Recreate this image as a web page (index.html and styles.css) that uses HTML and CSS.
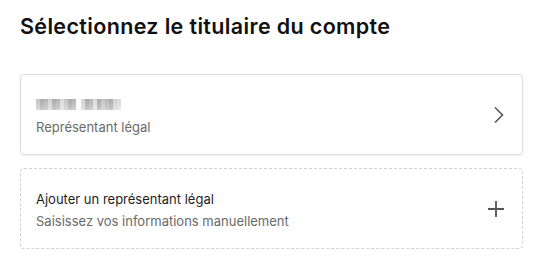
FILE: index.html
```html
<!DOCTYPE html>
<html lang="fr">
<head>
<meta charset="utf-8">
<link rel="stylesheet" href="styles.css">
</head>
<body>
<main class="page">
  <h1 class="title">Sélectionnez le titulaire du compte</h1>
  <div class="list">
    <button class="card card-solid" type="button">
      <span class="card-text">
        <span class="blur-name" aria-label="Nom masqué">
          <i class="px p1"></i><i class="px p4"></i><i class="px p2"></i><i class="px p3"></i><i class="px p4"></i><i class="px p2"></i><i class="px p5"></i><i class="px p1"></i><i class="px p4"></i><i class="px p2"></i><i class="gapx"></i><i class="px p3"></i><i class="px p4"></i><i class="px p2"></i><i class="px p5"></i><i class="px p4"></i><i class="px p1"></i><i class="px p2"></i><i class="px p4"></i><i class="px p3"></i><i class="px p5"></i>
        </span>
        <span class="sub">Représentant légal</span>
      </span>
      <svg class="icon" width="12" height="18" viewBox="0 0 12 18" aria-hidden="true">
        <path d="M2 1.5 L9.5 9 L2 16.5" fill="none" stroke="#555" stroke-width="1.6"/>
      </svg>
    </button>
    <button class="card card-dashed" type="button">
      <span class="card-text">
        <span class="main">Ajouter un représentant légal</span>
        <span class="sub">Saisissez vos informations manuellement</span>
      </span>
      <svg class="icon" width="18" height="18" viewBox="0 0 18 18" aria-hidden="true">
        <path d="M9 1 V17 M1 9 H17" fill="none" stroke="#555" stroke-width="1.8"/>
      </svg>
    </button>
  </div>
</main>
</body>
</html>
```
FILE: styles.css
```css
* { box-sizing: border-box; }
html, body { margin: 0; padding: 0; background: #fff; }
body { font-family: Inter, "Noto Sans", sans-serif; color: #1a1a1a; }
.page { padding: 12px 20px 0 20px; }
.title {
  margin: 0;
  font-size: 21.5px;
  line-height: 28px;
  font-weight: 600;
  letter-spacing: 0.35px;
  color: #111;
}
.list {
  margin-top: 34px;
  display: flex;
  flex-direction: column;
  gap: 13px;
}
.card {
  width: 100%;
  height: 81px;
  display: flex;
  align-items: center;
  justify-content: space-between;
  padding: 0 17px 0 15px;
  background: #fff;
  border-radius: 4px;
  font: inherit;
  text-align: left;
  cursor: pointer;
}
.card-solid {
  border: 1px solid #dedede;
  box-shadow: 0 1px 3px rgba(0,0,0,0.06);
}
.card-dashed {
  border: 1px dashed #d2d2d2;
}
.card-text {
  display: flex;
  flex-direction: column;
  gap: 2px;
  padding-top: 2px;
}
.main {
  font-size: 13px;
  line-height: 20px;
  color: #1e1e1e;
}
.sub {
  font-size: 13px;
  line-height: 20px;
  color: #6a6a6a;
}
.blur-name {
  display: flex;
  height: 20px;
  align-items: center;
}
.px {
  display: block;
  width: 4px;
  height: 11px;
}
.gapx { display: block; width: 5px; }
.p1 { background: linear-gradient(#c4c4c4, #dadada); }
.p2 { background: linear-gradient(#b3b3b3, #d0d0d0); }
.p3 { background: linear-gradient(#d2d2d2, #e2e2e2); }
.p4 { background: linear-gradient(#a9a9a9, #c8c8c8); }
.p5 { background: linear-gradient(#dadada, #e8e8e8); }
.icon { flex: none; display: block; }
```
